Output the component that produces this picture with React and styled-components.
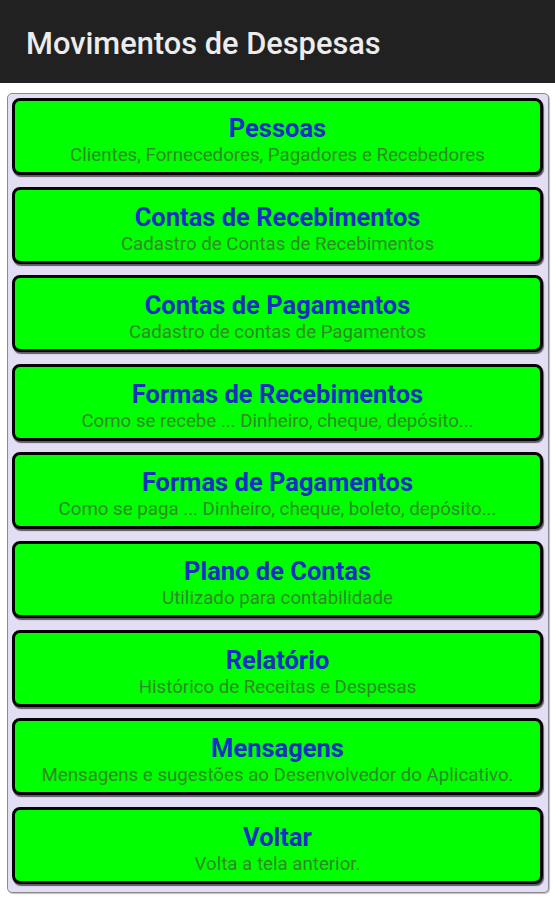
import React from "react";
import styled, { createGlobalStyle } from "styled-components";

const Global = createGlobalStyle`
  html, body { margin: 0; padding: 0; background: #ffffff; }
  body { font-family: Roboto, "Noto Sans", sans-serif; }
  * { box-sizing: border-box; }
`;

const Page = styled.div`
  width: 555px;
  height: 900px;
  display: flex;
  flex-direction: column;
  background: #ffffff;
`;

const AppBar = styled.header`
  height: 83px;
  background: #212121;
  display: flex;
  align-items: center;
  padding: 4px 0 0 26px;
  flex-shrink: 0;
`;

const Title = styled.h1`
  margin: 0;
  font-family: Roboto, sans-serif;
  font-weight: 500;
  font-size: 30.8px;
  color: #ececec;
  letter-spacing: 0;
`;

const Panel = styled.main`
  margin: 10px 6px 0 7px;
  height: 800px;
  background: #e4def4;
  border: 1px solid #8a8a8a;
  border-radius: 5px;
  box-shadow: 1px 1px 1px rgba(0, 0, 0, 0.25);
  padding: 4px 5px 0 4px;
  display: flex;
  flex-direction: column;
  gap: 11.6px;
`;

const MenuButton = styled.button`
  height: 77px;
  width: 100%;
  flex-shrink: 0;
  background: #00ff00;
  border: 3px solid #050505;
  border-radius: 8px;
  box-shadow: 1px 2px 1px rgba(0, 0, 0, 0.6);
  display: flex;
  flex-direction: column;
  align-items: center;
  justify-content: flex-start;
  gap: 2px;
  padding: 13px 0 0;
  cursor: pointer;
  font-family: Roboto, sans-serif;
`;

const Heading = styled.span`
  font-size: 25.5px;
  font-weight: 700;
  color: #1730c2;
  line-height: 28px;
  white-space: nowrap;
`;

const Caption = styled.span`
  font-size: 18.7px;
  font-weight: 400;
  color: #2f8a27;
  line-height: 22px;
  white-space: nowrap;
`;

const items = [
  ["Pessoas", "Clientes, Fornecedores, Pagadores e Recebedores"],
  ["Contas de Recebimentos", "Cadastro de Contas de Recebimentos"],
  ["Contas de Pagamentos", "Cadastro de contas de Pagamentos"],
  ["Formas de Recebimentos", "Como se recebe ... Dinheiro, cheque, depósito..."],
  ["Formas de Pagamentos", "Como se paga ... Dinheiro, cheque, boleto, depósito..."],
  ["Plano de Contas", "Utilizado para contabilidade"],
  ["Relatório", "Histórico de Receitas e Despesas"],
  ["Mensagens", "Mensagens e sugestões ao Desenvolvedor do Aplicativo."],
  ["Voltar", "Volta a tela anterior."],
];

export default function App() {
  return (
    <Page>
      <Global />
      <AppBar>
        <Title>Movimentos de Despesas</Title>
      </AppBar>
      <Panel>
        {items.map(([h, c]) => (
          <MenuButton key={h}>
            <Heading>{h}</Heading>
            <Caption>{c}</Caption>
          </MenuButton>
        ))}
      </Panel>
    </Page>
  );
}
